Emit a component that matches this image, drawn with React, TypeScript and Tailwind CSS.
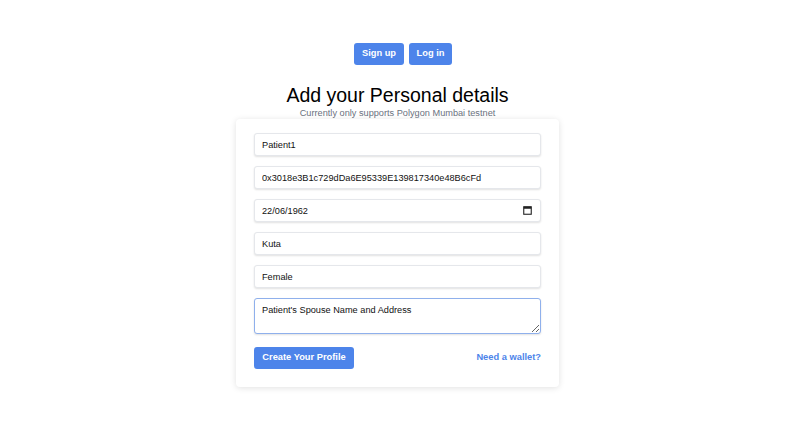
import { useState } from 'react';

const inputClass =
  'block h-[23px] w-full rounded-[3px] border border-[#e5e7eb] bg-white px-[7px] text-[9.2px] text-[#111] shadow-[0_1px_2px_rgba(0,0,0,0.12)] outline-none';

const btnClass = 'h-[22px] rounded-[3px] bg-[#4d84ea] text-[9.3px] font-bold text-white';

export default function App() {
  const [name, setName] = useState('Patient1');
  const [wallet, setWallet] = useState('0x3018e3B1c729dDa6E95339E139817340e48B6cFd');
  const [dob, setDob] = useState('22/06/1962');
  const [city, setCity] = useState('Kuta');
  const [gender, setGender] = useState('Female');
  const [notes, setNotes] = useState("Patient's Spouse Name and Address");

  return (
    <div className="flex min-h-[445px] flex-col items-center bg-white pt-[43px] font-['Liberation_Sans',Arial,sans-serif] text-[#111]">
      <div className="flex gap-[5px]">
        <button className={`${btnClass} w-[50px]`}>Sign up</button>
        <button className={`${btnClass} w-[43px]`}>Log in</button>
      </div>

      <div className="mr-[11px] flex flex-col items-center">
        <h1 className="mt-[18px] text-[19.5px] leading-[25px] text-black">Add your Personal details</h1>
        <p className="text-[9.2px] leading-[10px] text-[#6b7280]">Currently only supports Polygon Mumbai testnet</p>

        <div className="mt-[1px] w-[323px] rounded-[4px] bg-white px-[18px] pb-[18px] pt-[14px] shadow-[0_1px_6px_rgba(0,0,0,0.12)]">
          <div className="flex flex-col gap-[10px]">
            <input className={inputClass} value={name} onChange={(e) => setName(e.target.value)} />
            <input className={inputClass} value={wallet} onChange={(e) => setWallet(e.target.value)} />
            <div className="relative">
              <input className={inputClass} value={dob} onChange={(e) => setDob(e.target.value)} />
              <svg
                className="absolute right-[9px] top-[7px]"
                width="9"
                height="9"
                viewBox="0 0 9 9"
                fill="none"
              >
                <rect x="0.75" y="0.75" width="7.5" height="7.5" stroke="#222" strokeWidth="1.1" />
                <rect x="0.75" y="0.75" width="7.5" height="2" fill="#222" />
              </svg>
            </div>
            <input className={inputClass} value={city} onChange={(e) => setCity(e.target.value)} />
            <input className={inputClass} value={gender} onChange={(e) => setGender(e.target.value)} />
            <textarea
              className="block h-[36px] w-full resize-y rounded-[3px] border border-[#8fb0ec] bg-white px-[7px] py-[5px] text-[9.2px] leading-[12px] text-[#111] shadow-[0_1px_2px_rgba(0,0,0,0.12)] outline-none"
              value={notes}
              onChange={(e) => setNotes(e.target.value)}
            />
          </div>

          <div className="mt-[13px] flex items-center justify-between">
            <button className={`${btnClass} w-[100px]`}>Create Your Profile</button>
            <a href="#" className="text-[9.3px] font-bold text-[#4d84ea]">
              Need a wallet?
            </a>
          </div>
        </div>
      </div>
    </div>
  );
}
